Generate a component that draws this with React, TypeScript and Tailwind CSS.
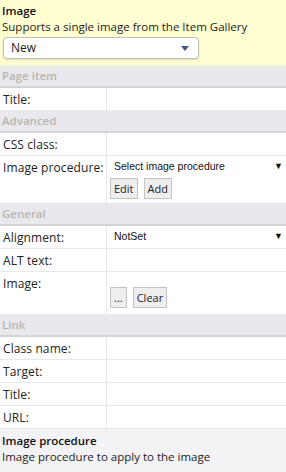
import React from "react";

const font = { fontFamily: '"Open Sans", "Noto Sans", sans-serif' };

function Section({ title }: { title: string }) {
  return (
    <div className="h-[22px] bg-[#e9e9ed] border-b-2 border-[#d4d4d8] pl-[2px] text-[11.5px] font-semibold leading-[20px] text-[#b8b4ad]">
      {title}
    </div>
  );
}

function Row({
  label,
  children,
  tall,
}: {
  label: string;
  children?: React.ReactNode;
  tall?: string;
}) {
  return (
    <div className={`flex border-b border-[#e8e8e8] ${tall ?? "h-[23px]"}`}>
      <div className="w-[107px] shrink-0 whitespace-nowrap border-r border-[#e8e8e8] pl-[3px] pt-[4px] text-[12px] tracking-[0.1px] leading-[16px] text-[#222]">
        {label}
      </div>
      <div className="flex-1 min-w-0">{children}</div>
    </div>
  );
}

function Btn({ children }: { children: React.ReactNode }) {
  return (
    <button className="h-[21px] px-[3px] border border-[#c4c4c4] bg-[#eeeeef] text-[11px] leading-[18px] text-[#222]">
      {children}
    </button>
  );
}

function Dropdown({ value }: { value: string }) {
  return (
    <div
      className="flex items-center justify-between pl-[7px] pr-[3px] h-[20px] text-[10.5px] text-[#111]"
      style={{ fontFamily: '"Liberation Sans", Arial, sans-serif' }}
    >
      <span>{value}</span>
      <span className="text-[9px]">▼</span>
    </div>
  );
}

export default function App() {
  return (
    <div className="w-[286px] h-[472px] bg-white flex flex-col overflow-hidden" style={font}>
      <div className="bg-[#ffffd2] h-[66px] px-[2px] pt-[3px] border-b border-[#f0f0d8]">
        <div className="text-[11.5px] font-semibold leading-[16px] text-[#111]">Image</div>
        <div className="text-[11.5px] leading-[16px] text-[#222]">Supports a single image from the Item Gallery</div>
        <div className="mt-[2px] ml-[1px] w-[196px] h-[22px] rounded-[4px] border border-[#bfbfbf] bg-white shadow-[0_1px_2px_rgba(0,0,0,0.15)] flex items-center justify-between pl-[7px] pr-[9px]">
          <span className="text-[12px] text-[#222]">New</span>
          <svg width="8" height="5" viewBox="0 0 8 5">
            <path d="M0 0 L8 0 L4 5 Z" fill="#3b5a8c" />
          </svg>
        </div>
      </div>

      <Section title="Page item" />
      <Row label="Title:" />

      <Section title="Advanced" />
      <Row label="CSS class:" />
      <Row label="Image procedure:" tall="h-[48px]">
        <div className="pt-[1px]">
          <Dropdown value="Select image procedure" />
          <div className="flex gap-[6px] pl-[3px] pt-[1px]">
            <Btn>Edit</Btn>
            <Btn>Add</Btn>
          </div>
        </div>
      </Row>

      <Section title="General" />
      <Row label="Alignment:">
        <div className="pt-[1px]">
          <Dropdown value="NotSet" />
        </div>
      </Row>
      <Row label="ALT text:" />
      <Row label="Image:" tall="h-[43px]">
        <div className="flex gap-[6px] pl-[3px] pt-[15px]">
          <Btn>...</Btn>
          <Btn>Clear</Btn>
        </div>
      </Row>

      <Section title="Link" />
      <Row label="Class name:" />
      <Row label="Target:" />
      <Row label="Title:" />
      <Row label="URL:" />

      <div className="flex-1 bg-[#f3f3f5] px-[2px] pt-[4px]">
        <div className="text-[11.5px] font-semibold leading-[16px] text-[#111]">Image procedure</div>
        <div className="text-[11.5px] leading-[16px] text-[#222]">Image procedure to apply to the image</div>
      </div>
    </div>
  );
}
